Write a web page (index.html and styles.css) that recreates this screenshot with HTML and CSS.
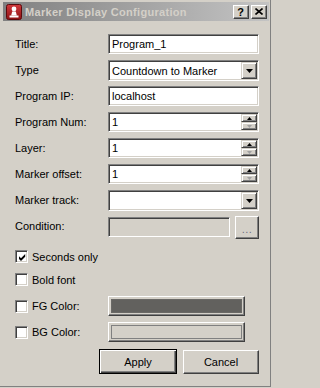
FILE: index.html
```html
<!DOCTYPE html>
<html>
<head>
<meta charset="utf-8">
<title>Marker Display Configuration</title>
<link rel="stylesheet" href="styles.css">
</head>
<body>
<div class="window">
  <div class="titlebar">
    <svg class="app-icon" width="16" height="16" viewBox="0 0 16 16">
      <defs>
        <linearGradient id="ig" x1="0" y1="0" x2="0" y2="1">
          <stop offset="0" stop-color="#d23a3c"/>
          <stop offset="1" stop-color="#8c1214"/>
        </linearGradient>
      </defs>
      <rect x="0.5" y="0.5" width="15" height="15" rx="2" fill="url(#ig)" stroke="#5c0a0c"/>
      <circle cx="8" cy="5" r="2.4" fill="#fff"/>
      <path d="M6.2 7.6 H9.8 L10.8 11.5 H5.2 Z" fill="#fff"/>
      <rect x="3.5" y="11.5" width="9" height="2" fill="#fff"/>
    </svg>
    <span class="caption">Marker Display Configuration</span>
    <div class="caption-btns">
      <span class="cbtn help">?</span>
      <span class="cbtn close">
        <svg width="8" height="7" viewBox="0 0 8 7"><path d="M0.5 0.5 L7.5 6.5 M7.5 0.5 L0.5 6.5" stroke="#000" stroke-width="1.6"/></svg>
      </span>
    </div>
  </div>

  <div class="content">
    <div class="form">
      <div class="row">
        <span class="label">Title:</span>
        <div class="edit"><span class="val">Program_1</span></div>
      </div>
      <div class="row">
        <span class="label">Type</span>
        <div class="combo">
          <span class="val">Countdown to Marker</span>
          <span class="drop"><svg width="7" height="4" viewBox="0 0 7 4"><path d="M0 0 H7 L3.5 4 Z" fill="#000"/></svg></span>
        </div>
      </div>
      <div class="row">
        <span class="label">Program IP:</span>
        <div class="edit"><span class="val">localhost</span></div>
      </div>
      <div class="row">
        <span class="label">Program Num:</span>
        <div class="spin">
          <span class="val">1</span>
          <span class="spin-btns">
            <span class="sbtn"><svg width="5" height="3" viewBox="0 0 5 3"><path d="M2.5 0 L5 3 H0 Z" fill="#000"/></svg></span>
            <span class="sbtn"><svg width="5" height="3" viewBox="0 0 5 3"><path d="M0 0 H5 L2.5 3 Z" fill="#a0a0a0"/></svg></span>
          </span>
        </div>
      </div>
      <div class="row">
        <span class="label">Layer:</span>
        <div class="spin">
          <span class="val">1</span>
          <span class="spin-btns">
            <span class="sbtn"><svg width="5" height="3" viewBox="0 0 5 3"><path d="M2.5 0 L5 3 H0 Z" fill="#000"/></svg></span>
            <span class="sbtn"><svg width="5" height="3" viewBox="0 0 5 3"><path d="M0 0 H5 L2.5 3 Z" fill="#a0a0a0"/></svg></span>
          </span>
        </div>
      </div>
      <div class="row">
        <span class="label">Marker offset:</span>
        <div class="spin">
          <span class="val">1</span>
          <span class="spin-btns">
            <span class="sbtn"><svg width="5" height="3" viewBox="0 0 5 3"><path d="M2.5 0 L5 3 H0 Z" fill="#000"/></svg></span>
            <span class="sbtn"><svg width="5" height="3" viewBox="0 0 5 3"><path d="M0 0 H5 L2.5 3 Z" fill="#a0a0a0"/></svg></span>
          </span>
        </div>
      </div>
      <div class="row">
        <span class="label">Marker track:</span>
        <div class="combo">
          <span class="val"></span>
          <span class="drop"><svg width="7" height="4" viewBox="0 0 7 4"><path d="M0 0 H7 L3.5 4 Z" fill="#000"/></svg></span>
        </div>
      </div>
      <div class="row row-cond">
        <span class="label">Condition:</span>
        <div class="edit disabled"></div>
        <span class="btn dots">...</span>
      </div>

      <div class="row row-check first-check">
        <span class="check checked"><svg width="9" height="9" viewBox="0 0 9 9"><path d="M1 3.2 L3 5.2 L7.2 1 V3.8 L3 8 L1 6 Z" fill="#000"/></svg></span>
        <span class="check-label">Seconds only</span>
      </div>
      <div class="row row-check">
        <span class="check"></span>
        <span class="check-label">Bold font</span>
      </div>
      <div class="row row-color fg-row">
        <span class="check"></span>
        <span class="check-label color-label">FG Color:</span>
        <span class="btn color-btn"><span class="swatch fg"></span></span>
      </div>
      <div class="row row-color">
        <span class="check"></span>
        <span class="check-label color-label">BG Color:</span>
        <span class="btn color-btn"><span class="swatch bg"></span></span>
      </div>

      <div class="buttons">
        <span class="btn push default">Apply</span>
        <span class="btn push">Cancel</span>
      </div>
    </div>
  </div>
</div>
</body>
</html>
```

FILE: styles.css
```css
html, body {
  margin: 0;
  padding: 0;
  background: #d4d0c8;
}

body {
  font-family: "Liberation Sans", Arial, sans-serif;
  font-size: 11px;
  color: #000;
}

.window {
  box-sizing: border-box;
  width: 271px;
  height: 387px;
  padding: 2px 1px 0 3px;
  border-right: 1px solid #808080;
  border-bottom: 1px solid #808080;
}

/* ---------- title bar ---------- */
.titlebar {
  height: 19px;
  display: flex;
  align-items: center;
  background: linear-gradient(to right, #808080, #c4c4c4);
}

.app-icon {
  display: block;
  margin-left: 3px;
  flex: none;
}

.caption {
  margin-left: 3px;
  font-weight: bold;
  font-size: 11px;
  letter-spacing: 0.3px;
  color: #d4d0c8;
  white-space: nowrap;
}

.caption-btns {
  margin-left: auto;
  margin-right: 2px;
  display: flex;
  gap: 2px;
}

.cbtn {
  box-sizing: border-box;
  width: 16px;
  height: 14px;
  background: #d4d0c8;
  border: 1px solid;
  border-color: #fff #404040 #404040 #fff;
  box-shadow: inset -1px -1px #808080;
  display: flex;
  align-items: center;
  justify-content: center;
}

.cbtn.help {
  font-weight: bold;
  font-size: 11px;
  line-height: 12px;
  padding-right: 1px;
}

.cbtn svg {
  display: block;
  margin-right: 1px;
  margin-bottom: 1px;
}

/* ---------- content ---------- */
.content {
  padding: 13px 10px 0 12px;
}

.form {
  display: flex;
  flex-direction: column;
}

.row {
  display: flex;
  align-items: flex-start;
  height: 21px;
  margin-top: 5px;
}

.row:first-child {
  margin-top: 0;
}

.label {
  width: 93px;
  flex: none;
  line-height: 20px;
  white-space: nowrap;
}

.edit,
.combo,
.spin {
  box-sizing: border-box;
  width: 151px;
  height: 20px;
  background: #fff;
  border: 1px solid;
  border-color: #808080 #fff #fff #808080;
  box-shadow: inset 1px 1px #404040, inset -1px -1px #d4d0c8;
  display: flex;
  align-items: center;
  padding: 1px;
}

.combo {
  height: 21px;
}

.val {
  flex: 1;
  padding-left: 2px;
  line-height: 16px;
  white-space: nowrap;
  overflow: hidden;
}

.edit.disabled {
  width: 122px;
  background: #d4d0c8;
  margin-top: 1px;
}

.drop {
  box-sizing: border-box;
  flex: none;
  width: 16px;
  height: 17px;
  background: #d4d0c8;
  border: 1px solid;
  border-color: #d4d0c8 #404040 #404040 #d4d0c8;
  box-shadow: inset 1px 1px #fff, inset -1px -1px #808080;
  display: flex;
  align-items: center;
  justify-content: center;
}

.drop svg {
  display: block;
}

.spin-btns {
  flex: none;
  width: 16px;
  height: 16px;
  display: flex;
  flex-direction: column;
}

.sbtn {
  box-sizing: border-box;
  height: 8px;
  background: #d4d0c8;
  border: 1px solid;
  border-color: #d4d0c8 #404040 #404040 #d4d0c8;
  box-shadow: inset 1px 1px #fff, inset -1px -1px #808080;
  display: flex;
  align-items: center;
  justify-content: center;
}

.sbtn svg {
  display: block;
}

/* ---------- buttons ---------- */
.btn {
  box-sizing: border-box;
  background: #d4d0c8;
  border: 1px solid;
  border-color: #fff #404040 #404040 #fff;
  box-shadow: inset -1px -1px #808080;
  display: flex;
  align-items: center;
  justify-content: center;
}

.row-cond {
  height: 23px;
}

.dots {
  width: 24px;
  height: 23px;
  margin-left: auto;
  color: #6e6e80;
  font-size: 11px;
  line-height: 14px;
  padding-top: 2px;
  letter-spacing: 0.5px;
}

/* ---------- checkboxes ---------- */
.row-check {
  height: 17px;
  align-items: center;
  margin-top: 6px;
}

.first-check {
  margin-top: 9px;
}

.check {
  box-sizing: border-box;
  flex: none;
  width: 13px;
  height: 13px;
  background: #fff;
  border: 1px solid;
  border-color: #808080 #fff #fff #808080;
  box-shadow: inset 1px 1px #404040, inset -1px -1px #d4d0c8;
  display: flex;
  align-items: center;
  justify-content: center;
}

.check svg {
  display: block;
  margin: 1px 0 0 1px;
}

.check-label {
  margin-left: 4px;
  white-space: nowrap;
}

.row-color {
  height: 20px;
  align-items: center;
  margin-top: 6px;
}

.fg-row {
  margin-top: 8px;
}

.color-label {
  width: 76px;
  flex: none;
}

.color-btn {
  width: 137px;
  height: 20px;
  padding: 2px;
}

.swatch {
  display: block;
  box-sizing: border-box;
  width: 100%;
  height: 100%;
  border: 1px solid #808080;
}

.swatch.fg {
  background: #62615e;
  border-color: #6a6966;
}

.swatch.bg {
  background: #d4d0c8;
}

.buttons {
  display: flex;
  justify-content: flex-end;
  gap: 6px;
  margin-top: 8px;
}

.push {
  width: 76px;
  height: 24px;
  font-size: 11px;
}

.push.default {
  width: 78px;
  height: 25px;
  border: 1px solid #000;
  box-shadow: inset 1px 1px #fff, inset -1px -1px #404040, inset -2px -2px #808080;
  margin-top: -1px;
}
```
